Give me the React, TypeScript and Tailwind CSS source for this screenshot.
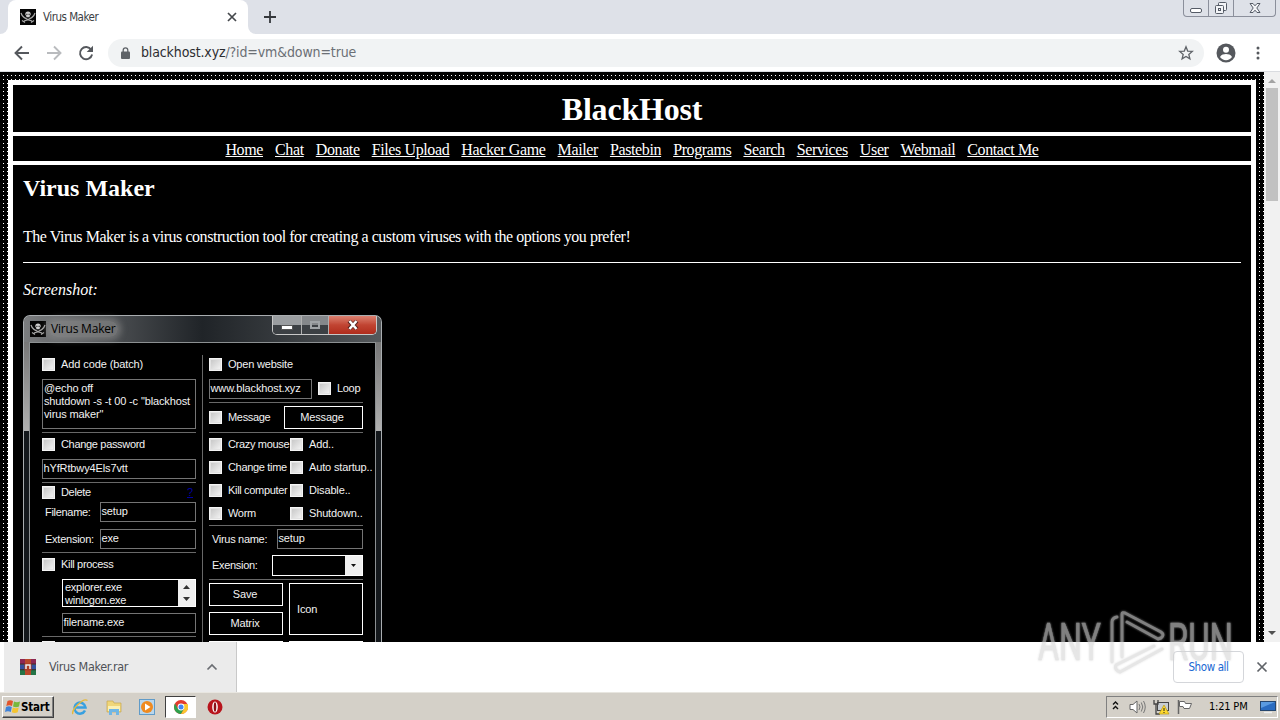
import React from 'react';

const navLinks = [
  'Home', 'Chat', 'Donate', 'Files Upload', 'Hacker Game', 'Mailer', 'Pastebin',
  'Programs', 'Search', 'Services', 'User', 'Webmail', 'Contact Me',
];

const options = [
  ['Crazy mouse', 'Add..'],
  ['Change time', 'Auto startup..'],
  ['Kill computer', 'Disable..'],
  ['Worm', 'Shutdown..'],
];

const Skull = () => (
  <svg width="16" height="16" viewBox="0 0 16 16" className="shrink-0">
    <rect width="16" height="16" fill="#050505" />
    <path d="M1 4c1 4 5 6.500 11 8M15 4c-1 4-5 6.500-11 8M2 11.500l3 2M14 11.500l-3 2" stroke="#a8a8a8" strokeWidth="1.200" fill="none" />
    <path d="M8 2.500c1.800 0 2.700 1 2.700 2.400 0 1-.5 1.500-1 1.900V8.300H6.300V6.800c-.5-.4-1-.9-1-1.900C5.300 3.500 6.200 2.500 8 2.500z" fill="#cfcfcf" />
    <path d="M6.300 4.800h1.100v1.100H6.300zM8.600 4.800h1.100v1.100H8.600z" fill="#222" />
  </svg>
);

const Check = () => (
  <span className="block w-[13px] h-[13px] shrink-0 border border-[#f4f4f4] bg-linear-to-br from-[#c4c4c4] to-[#f6f6f6] shadow-[inset_0_0_0_1px_#e2e2e2]" />
);

const Option = ({ label, className = '' }: { label: string; className?: string }) => (
  <div className={`flex items-center gap-[6px] tracking-[-0.32px] ${className}`}>
    <Check />
    <span>{label}</span>
  </div>
);

const Field = ({ value, className = '' }: { value: string; className?: string }) => (
  <div className={`h-5 border border-[#747474] pl-[0.5px] leading-[17px] ${className}`}>{value}</div>
);

const Line = ({ className = '' }: { className?: string }) => (
  <div className={`h-px bg-[#686868] ${className}`} />
);

const LeftColumn = () => (
  <div className="w-[154px] flex flex-col">
    <Option label="Add code (batch)" className="h-[18px] tracking-[-0.1px]!" />
    <div className="mt-[6px] h-[50px] border border-[#747474] pl-px pt-[2px] leading-[13px]">
      @echo off<br />shutdown -s -t 00 -c "blackhost<br />virus maker"
    </div>
    <Line className="mt-[3px]" />
    <Option label="Change password" className="h-[22px]" />
    <Field value="hYfRtbwy4Els7vtt" className="mt-1" />
    <Line className="mt-[3px]" />
    <div className="h-[19px] flex items-center justify-between pr-[3px]">
      <Option label="Delete" />
      <span className="text-[#0000a0] underline">?</span>
    </div>
    <div className="flex items-center pl-[3px]">
      <span className="w-[55px] tracking-[-0.3px]">Filename:</span>
      <Field value="setup" className="flex-1" />
    </div>
    <div className="mt-[7px] flex items-center pl-[3px]">
      <span className="w-[55px] tracking-[-0.25px]">Extension:</span>
      <Field value="exe" className="flex-1" />
    </div>
    <Line className="mt-[3px]" />
    <Option label="Kill process" className="h-[22px]" />
    <div className="mt-1 ml-5 h-7 border border-white flex justify-between overflow-hidden">
      <div className="pl-[2px] pt-px leading-[13px] tracking-[-0.25px]">explorer.exe<br />winlogon.exe</div>
      <div className="w-[17px] bg-[#f0f0f0] flex flex-col items-center justify-between py-[5px]">
        <svg width="7" height="4"><path d="M0 4L3.500 0 7 4z" fill="#333" /></svg>
        <svg width="7" height="4"><path d="M0 0L3.500 4 7 0z" fill="#333" /></svg>
      </div>
    </div>
    <Field value="filename.exe" className="mt-[6px] ml-5" />
    <Line className="mt-[3px]" />
    <Option label="" className="h-[21px]" />
  </div>
);

const RightColumn = () => (
  <div className="w-[154px] flex flex-col">
    <Option label="Open website" className="h-[18px] tracking-[-0.2px]!" />
    <div className="mt-[6px] flex">
      <Field value="www.blackhost.xyz" className="w-[103px]" />
      <Option label="Loop" className="ml-[6px] h-[18px]" />
    </div>
    <Line className="mt-[3px]" />
    <div className="mt-[3px] h-[23px] flex items-center justify-between">
      <Option label="Message" />
      <div className="w-[79px] h-[23px] border border-white flex items-center justify-center pr-[3px]">Message</div>
    </div>
    <Line className="mt-[3px]" />
    {options.map(([left, right]) => (
      <div key={left} className="h-[23px] flex whitespace-nowrap">
        <Option label={left} className="w-[81px] shrink-0" />
        <Option label={right} className="tracking-[-0.15px]!" />
      </div>
    ))}
    <Line />
    <div className="mt-[3px] flex items-center pl-[3px]">
      <span className="w-[65px] tracking-[-0.3px]">Virus name:</span>
      <Field value="setup" className="flex-1" />
    </div>
    <div className="mt-[6px] flex items-center pl-[3px]">
      <span className="w-[60px] tracking-[-0.3px]">Exension:</span>
      <div className="flex-1 h-[21px] border border-white flex justify-end">
        <div className="w-[17px] bg-[#f0f0f0] flex items-center justify-center">
          <svg width="5" height="3"><path d="M0 0h5L2.500 3z" fill="#111" /></svg>
        </div>
      </div>
    </div>
    <Line className="mt-[3px]" />
    <div className="mt-[3px] flex gap-[6px]">
      <div className="w-[74px] flex flex-col gap-[6px]">
        <div className="h-[23px] border border-white flex items-center justify-center pr-[2px]">Save</div>
        <div className="h-[23px] border border-white flex items-center justify-center pr-[2px]">Matrix</div>
        <div className="h-[23px] border border-white" />
      </div>
      <div className="w-[74px] flex flex-col gap-[6px]">
        <div className="h-[52px] border border-white flex items-center pl-[7px]">Icon</div>
        <div className="h-[23px] border border-white" />
      </div>
    </div>
  </div>
);

const VirusMakerWindow = () => (
  <div className="w-[359px] h-[360px] rounded-t-[7px] border border-[#a9adb0] border-b-0 bg-linear-to-b from-[#686868] via-[#b0b0b0] via-[32%] to-[#14181c] to-[32%] px-[5px] text-[11px] tracking-[-0.13px] text-[#f2f2f2] font-['Liberation_Sans',sans-serif]">
    <div className="-mx-[5px] h-[26px] rounded-t-[6px] bg-linear-to-r from-[#7b7d7f] via-[#202428] via-[50%] to-[#55595c] flex items-start justify-between">
      <div className="flex items-center gap-[3px] pl-[6px] pt-[5px]">
        <Skull />
        <span className="px-[2px] rounded-full bg-[#8c8c8c]/60 shadow-[0_0_6px_3px_#8c8c8c99] text-[12px] leading-[16px] text-black font-['Open_Sans',sans-serif] tracking-[-0.2px]">Virus Maker</span>
      </div>
      <div className="mr-[4px] w-[105px] h-[19px] border border-t-0 border-[#c8c8c8] rounded-b-[5px] overflow-hidden flex">
        <div className="w-[29px] bg-linear-to-b from-[#9a9da0] from-50% to-[#3c4044] to-50% border-r border-[#b0b0b0] flex items-center justify-center">
          <span className="w-[12px] h-[5px] mt-[4px] bg-white border border-[#555]" />
        </div>
        <div className="w-[27px] bg-linear-to-b from-[#85888b] from-50% to-[#3c4044] to-50% border-r border-[#b0b0b0] flex items-center justify-center">
          <span className="w-[10px] h-2 border-2 border-[#a0a4a7]" />
        </div>
        <div className="flex-1 bg-linear-to-b from-[#dc8070] via-[#c14432] via-50% to-[#b02c1c] flex items-center justify-center">
          <svg width="12" height="10" viewBox="0 0 12 10"><path d="M2 1l8 8M10 1L2 9" stroke="#562522" strokeWidth="4" /><path d="M2.500 1l7 8M9.500 1l-7 8" stroke="#fff" strokeWidth="2.500" /></svg>
        </div>
      </div>
    </div>
    <div className="h-[340px] border border-[#8c9092] bg-black pt-[12px] pl-[12px] flex gap-[6px]">
      <LeftColumn />
      <div className="w-px bg-[#686868]" />
      <RightColumn />
    </div>
  </div>
);

const TabStrip = () => (
  <div className="h-[34px] bg-[#dee1e8] flex items-start justify-between">
    <div className="flex h-full">
      <div className="w-2 bg-white"><div className="h-full bg-[#dee1e8] rounded-br-lg" /></div>
      <div className="w-[240px] bg-white rounded-t-lg flex items-center pl-3 pr-[10px]">
        <Skull />
        <span className="ml-[7px] pt-px flex-1 text-[11.500px] tracking-[-0.5px] text-[#3c4043]">Virus Maker</span>
        <svg width="12" height="12" viewBox="0 0 12 12"><path d="M2 2l8 8M10 2l-8 8" stroke="#45484c" strokeWidth="1.700" /></svg>
      </div>
      <div className="w-2 bg-white"><div className="h-full bg-[#dee1e8] rounded-bl-lg" /></div>
      <svg width="12" height="12" viewBox="0 0 12 12" className="ml-2 mt-[11px]"><path d="M6 0v12M0 6h12" stroke="#35383c" strokeWidth="1.800" /></svg>
    </div>
    <div className="mr-1 w-[93px] h-[17px] border border-t-0 border-[#8b8f9b] rounded-b-[4px] flex">
      <div className="w-[25px] border-r border-[#8b8f9b] flex justify-center">
        <span className="mt-[8px] w-3 h-[5px] rounded-[2px] border border-[#555b66] bg-white" />
      </div>
      <div className="w-[25px] border-r border-[#8b8f9b] flex justify-center">
        <svg width="14" height="14" viewBox="0 0 14 14" className="mt-px" fill="#f3f4f7" stroke="#555b66"><rect x="4.500" y="1.500" width="8" height="8" rx="1" /><rect x="1.500" y="4.500" width="8" height="8" rx="1" /><rect x="4.500" y="7.500" width="2" height="2" /></svg>
      </div>
      <div className="flex-1 flex justify-center">
        <svg width="12" height="12" viewBox="0 0 12 12" className="mt-[2px]"><path d="M1 1.500h3l2 2.300 2-2.300h3L7.800 6l3.200 4.500H8L6 8.200 4 10.500H1L4.200 6z" fill="#f3f4f7" stroke="#555b66" /></svg>
      </div>
    </div>
  </div>
);

const Toolbar = () => (
  <div className="h-[38px] bg-white border-b border-[#dadce0] flex items-center pl-[14px] pr-[12px] text-[#6b6f75]">
    <svg width="16" height="16" viewBox="0 0 16 16" fill="none" stroke="#55585d" strokeWidth="1.900"><path d="M15 8H2M8 1.500L1.500 8 8 14.500" /></svg>
    <svg width="16" height="16" viewBox="0 0 16 16" fill="none" stroke="#b9bbbe" strokeWidth="1.900" className="ml-4"><path d="M1 8h13M8 1.500L14.500 8 8 14.500" /></svg>
    <svg width="16" height="16" viewBox="0 0 16 16" className="ml-4"><path d="M13.200 4.700A6.100 6.100 0 1 0 14.100 9.500" fill="none" stroke="#55585d" strokeWidth="1.900" /><path d="M15 .8v6.300H8.700z" fill="#55585d" /></svg>
    <div className="ml-[14px] flex-1 h-7 rounded-full bg-[#f1f3f4] flex items-center pl-[13px] pr-[10px]">
      <svg width="9" height="12" viewBox="0 0 9 12"><path d="M2.200 5V3.200a2.300 2.300 0 0 1 4.600 0V5" fill="none" stroke="#5f6368" strokeWidth="1.300" /><rect y="4.500" width="9" height="7.500" rx="1" fill="#5f6368" /></svg>
      <span className="ml-[11px] flex-1 text-[14px] tracking-[-0.13px]"><span className="text-[#2c2d30]">blackhost.xyz</span>/?id=vm&amp;down=true</span>
      <svg width="16" height="16" viewBox="0 0 16 16"><path d="M8 1.800l1.700 4.300 4.600.3-3.500 3 1.100 4.500L8 11.400l-3.900 2.500 1.100-4.500-3.500-3 4.600-.3z" fill="none" stroke="#5f6368" strokeWidth="1.300" /></svg>
    </div>
    <svg width="20" height="20" viewBox="0 0 20 20" className="ml-[12px]"><circle cx="10" cy="10" r="9.500" fill="#55585d" /><circle cx="10" cy="6.800" r="3" fill="#fff" /><path d="M4 14c1-2.400 4-3 6-3s5 .6 6 3c-1.300 2-3.500 3.200-6 3.200S5.300 16 4 14z" fill="#fff" /></svg>
    <svg width="4" height="14" viewBox="0 0 4 14" className="ml-[20px] mr-[8px]" fill="#55585d"><circle cx="2" cy="2" r="1.500" /><circle cx="2" cy="7" r="1.500" /><circle cx="2" cy="12" r="1.500" /></svg>
  </div>
);

const Scrollbar = () => (
  <div className="w-4 bg-[#f1f1f1] flex flex-col items-center">
    <svg width="8" height="4" className="mt-[7px] shrink-0"><path d="M0 4L4 0l4 4z" fill="#a3a3a3" /></svg>
    <div className="mt-[5px] w-[12px] h-[113px] shrink-0 bg-[#c1c1c1]" />
    <svg width="8" height="4" className="mt-auto mb-[7px] shrink-0"><path d="M0 0h8L4 4z" fill="#505050" /></svg>
  </div>
);

const Page = () => (
  <div className="flex-1 pt-2 px-2 bg-black bg-[linear-gradient(to_right,#000_3px,transparent_3px),linear-gradient(#000_3px,#fff_3px)] bg-[length:4px_4px] font-['Liberation_Serif',serif] text-white overflow-hidden">
    <div className="h-full bg-white p-[5px] pb-0 flex flex-col gap-1">
      <h1 className="h-[47px] shrink-0 bg-black text-center text-[32px] leading-[48px] tracking-[-0.2px] font-bold">BlackHost</h1>
      <div className="h-[25px] shrink-0 bg-black flex justify-center gap-[12px] text-[16px] leading-[27px] tracking-[-0.38px]">
        {navLinks.map((link) => (
          <a key={link} className="underline whitespace-nowrap">{link}</a>
        ))}
      </div>
      <div className="flex-1 min-h-0 bg-black px-[10px] overflow-hidden">
        <h2 className="pt-[9px] text-[24px] leading-[28px] font-bold">Virus Maker</h2>
        <p className="mt-[26px] text-[16px] leading-[18px] tracking-[-0.455px]">The Virus Maker is a virus construction tool for creating a custom viruses with the options you prefer!</p>
        <div className="mt-[16px] h-px bg-white" />
        <p className="mt-[18px] mb-[16px] text-[16px] leading-[18px] italic">Screenshot:</p>
        <VirusMakerWindow />
      </div>
    </div>
  </div>
);

const Rar = () => (
  <svg width="16" height="16" viewBox="0 0 16 16">
    <rect y="0" width="16" height="5" fill="#8d2753" /><rect y="5.500" width="16" height="5" fill="#35519f" /><rect y="11" width="16" height="5" fill="#257447" />
    <path d="M0 5.200h16M0 10.700h16" stroke="#241c1c" />
    <path d="M5 0h6v16H5z" fill="#b9472a" />
    <rect x="4.500" y="4.500" width="7" height="7" fill="#aa3b24" /><path d="M6 10V6h4v4" fill="none" stroke="#eee" strokeWidth="1.500" />
  </svg>
);

const DownloadBar = () => (
  <div className="h-[50px] bg-white flex items-center">
    <div className="ml-1 w-[233px] h-full bg-[#ebebeb] border-r border-[#c9c9c9] flex items-center pl-4 pr-[18px]">
      <Rar />
      <span className="ml-[13px] flex-1 text-[12.500px] tracking-[-0.36px] text-[#4f5257]">Virus Maker.rar</span>
      <svg width="12" height="8" viewBox="0 0 12 8"><path d="M1.500 6.500L6 2l4.500 4.500" fill="none" stroke="#6a6d72" strokeWidth="1.700" /></svg>
    </div>
    <div className="ml-auto w-[71px] h-8 border border-[#d4d6da] rounded-[4px] flex items-center justify-center pt-px text-[11.500px] tracking-[-0.4px] text-[#1967d2]">Show all</div>
    <svg width="12" height="12" viewBox="0 0 12 12" className="ml-3 mr-3"><path d="M1.500 1.500l9 9M10.500 1.500l-9 9" stroke="#5f6368" strokeWidth="1.700" /></svg>
  </div>
);

const Taskbar = () => (
  <div className="h-7 bg-[#d4d0c8] border-t border-[#e8e6e0] flex items-center text-black">
    <div className="ml-[2px] w-[52px] h-[22px] border border-t-white border-l-white border-r-[#404040] border-b-[#404040] shadow-[inset_-1px_-1px_0_#808080] flex items-center pl-[2px]">
      <svg width="16" height="15" viewBox="0 0 16 15"><path d="M2.500 2C4.500.8 6 1 8 2L7 7C5 6 3.500 6 1.300 7z" fill="#e2552b" /><path d="M9 2.500c2 1 3.800 1 6 0l-1 5c-2 1-4 1-6 0z" fill="#78b83c" /><path d="M1 8c2-1 3.800-1 5.800 0l-1 5C4 12 2 12 0 13z" fill="#3f82d8" /><path d="M7.800 8.500c2 1 3.800 1 5.900 0l-1 4.700c-2 1-4 1-5.900 0z" fill="#f4c430" /></svg>
      <span className="pt-[2px] text-[11.500px] font-bold tracking-[-0.2px]">Start</span>
    </div>
    <svg width="18" height="18" viewBox="0 0 18 18" className="ml-[17px]"><path d="M14 12.500A5.500 5.500 0 1 1 14.500 9.500H4" fill="none" stroke="#38a0e0" strokeWidth="2.500" /><path d="M2 16C-.5 13 12-1 16.500 2.500" fill="none" stroke="#e5b93c" strokeWidth="1.300" /></svg>
    <svg width="18" height="18" viewBox="0 0 18 18" className="ml-4"><path d="M2 3h6l1 2h7v9H2z" fill="#f0d679" stroke="#c5a650" strokeWidth=".7" /><path d="M3 8h12v5H3z" fill="#fbf0b4" /><path d="M4 17v-6h10v6h-3v-3H7v3z" fill="#70b6e5" /></svg>
    <svg width="16" height="16" viewBox="0 0 16 16" className="ml-4"><rect x=".5" y=".5" width="15" height="15" fill="#b9d6ec" stroke="#609bc8" /><circle cx="8" cy="8" r="6" fill="#ef8a20" /><path d="M6 4.500v7L11.500 8z" fill="#fff" /></svg>
    <div className="ml-[10px] w-[31px] h-[22px] bg-white border border-t-[#404040] border-l-[#404040] border-r-white border-b-white flex items-center justify-center">
      <svg width="14" height="14" viewBox="0 0 14 14"><circle cx="7" cy="7" r="7" fill="#e33b2e" /><path d="M1 3.500A7 7 0 0 0 7 14l3-5H4z" fill="#2da14c" /><path d="M7 14a7 7 0 0 0 6.500-10H7l3 5z" fill="#fbc62f" /><circle cx="7" cy="7" r="3.400" fill="#fff" /><circle cx="7" cy="7" r="2.500" fill="#4285f4" /></svg>
    </div>
    <svg width="16" height="16" viewBox="0 0 16 16" className="ml-[11px]"><circle cx="8" cy="8" r="7.500" fill="#b8141c" /><ellipse cx="8" cy="8" rx="2.800" ry="5.500" fill="#fff" /><ellipse cx="8" cy="8" rx="1.300" ry="4.700" fill="#8d1017" /></svg>
    <div className="ml-auto mr-[2px] w-[172px] h-[22px] border border-t-[#808080] border-l-[#808080] border-r-white border-b-white flex items-center">
      <svg width="7" height="9" viewBox="0 0 7 9" className="ml-[5px] mb-[2px]"><path d="M1 3.500L3.500 1 6 3.500M1 8l2.500-2.500L6 8" fill="none" stroke="#111" strokeWidth="1.400" /></svg>
      <svg width="17" height="16" viewBox="0 0 17 16" className="ml-[10px]"><path d="M1 5.500h3L8 2v12l-4-3.500H1z" fill="#fff" stroke="#666" /><path d="M10 5q2 3 0 6M12.300 3.500q3 4.500 0 9M14.500 2q3.500 6 0 12" fill="none" stroke="#777" /></svg>
      <svg width="17" height="16" viewBox="0 0 17 16" className="ml-[7px]"><rect x="4.500" y="3.500" width="11" height="8" fill="#c8cdd2" stroke="#444" /><path d="M1 1v4h4V1M3 5v10h4" fill="none" stroke="#444" strokeWidth="1.300" /><path d="M11 6l5 9H6z" fill="#ffd92e" stroke="#b79a15" strokeWidth=".7" /><path d="M11 9v3M11 13v1" stroke="#222" /></svg>
      <svg width="17" height="16" viewBox="0 0 17 16" className="ml-[6px]"><path d="M2.500 1v14" stroke="#666" strokeWidth="1.500" /><path d="M3.500 2.500h5l1 2h6l-2 5H8l-1-2H3.500z" fill="#fff" stroke="#666" /></svg>
      <span className="ml-[16px] pt-[2px] text-[11px] tracking-[-0.2px] whitespace-nowrap">1:21 PM</span>
      <svg width="16" height="14" viewBox="0 0 16 14" className="ml-auto mr-px"><rect x=".5" y="1.500" width="15" height="9" fill="#2b6cc0" stroke="#26466e" /><path d="M1 2h14L1 8z" fill="#5b9be0" /><path d="M4 12.500h8" stroke="#eee" strokeWidth="1.500" /></svg>
    </div>
  </div>
);

const Watermark = () => (
  <svg width="204" height="72" viewBox="0 0 204 72" className="absolute left-[1034px] top-[606px] drop-shadow-[0_0_1px_#c8c8c8]" opacity=".6">
    <g fill="#d6d6d6" stroke="#d6d6d6" strokeWidth=".5" fontFamily="Roboto" fontSize="52">
      <text x="4" y="54" textLength="63" lengthAdjust="spacingAndGlyphs">ANY</text>
      <text x="134" y="54" textLength="65" lengthAdjust="spacingAndGlyphs">RUN</text>
    </g>
    <path d="M78 56V16q0-4 5-5M88 51V8q0-2 3-1l36 19q4 3 0 6l-3 1L93 16M120 40L82 59q-2 5 4 7l42-23" fill="none" stroke="#d6d6d6" strokeWidth="2.900" strokeLinecap="round" strokeLinejoin="round" />
  </svg>
);

const App = () => (
  <div className="relative w-[1280px] h-[720px] overflow-hidden flex flex-col font-['DejaVu_Sans_Condensed','DejaVu_Sans',sans-serif]">
    <TabStrip />
    <Toolbar />
    <div className="h-[570px] flex">
      <Page />
      <Scrollbar />
    </div>
    <DownloadBar />
    <Taskbar />
    <Watermark />
  </div>
);

export default App;
